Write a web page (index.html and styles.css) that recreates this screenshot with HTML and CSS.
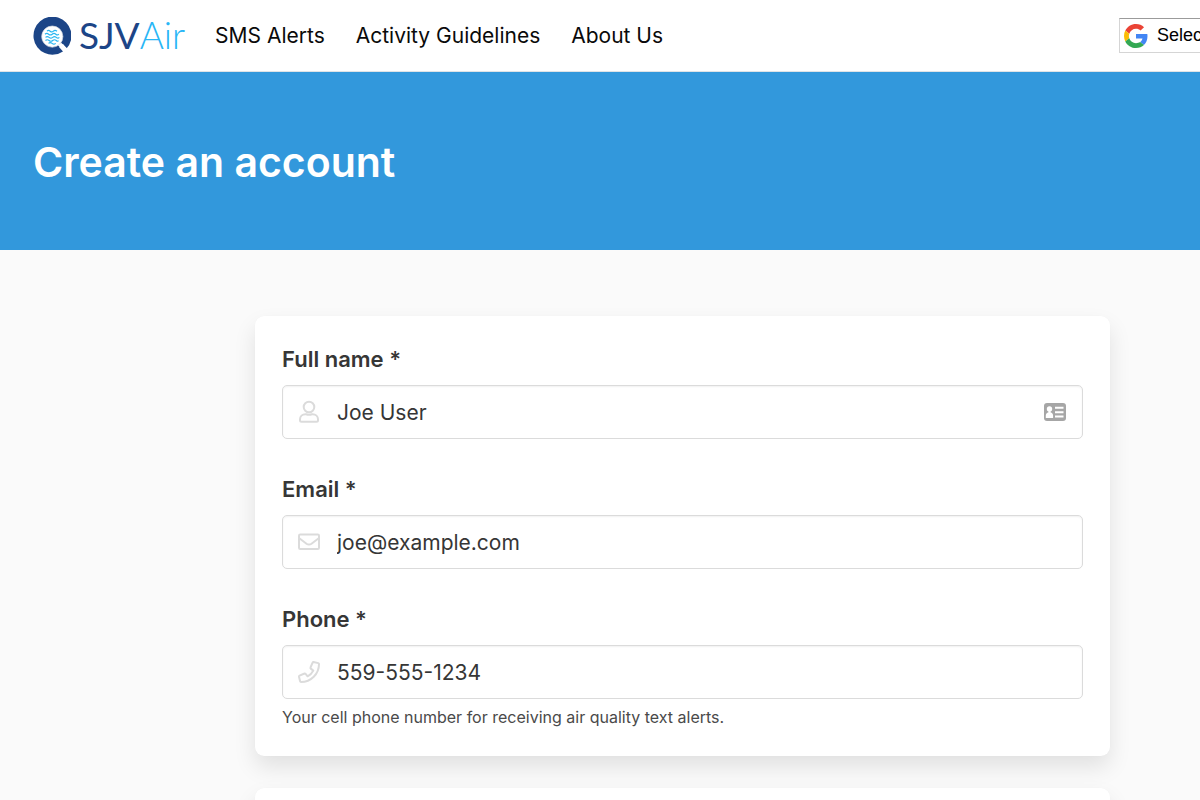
FILE: index.html
```html
<!DOCTYPE html>
<html lang="en">
<head>
    <meta charset="UTF-8">
    <meta name="viewport" content="width=device-width, initial-scale=1.0">
    <title>Create an account - SJVAir</title>
    <link rel="stylesheet" href="styles.css">
</head>
<body>
    <header class="navbar">
        <a class="logo" href="#">
            <svg class="logo-mark" viewBox="0 0 38 38" aria-hidden="true">
                <path d="M33.500 31.500A19 19 0 1 0 30 34.500L26 30l4-3z" fill="#1c4587"/>
                <path d="M25.500 26L35 35" stroke="#fff" stroke-width="4"/>
                <circle cx="19.300" cy="19.600" r="10.600" fill="#fff" stroke="#d3d8e0" stroke-width=".7"/>
                <path d="M14 14.200q1.500-1.500 3.200 0t3.200 0 3.600 0M12 17.200q1.800-1.500 3.600 0t3.600 0 3.600 0 3 0M12.500 20.400q1.800-1.500 3.600 0t3.600 0 3.600 0 3 0M12.500 23.500q1.800-1.500 3.600 0t3.600 0 3.600 0 2 0M15.500 26.400q1.800-1.500 3.600 0t3.600 0" fill="none" stroke="#29b6f0" stroke-width="1.200"/>
            </svg>
            <span class="logo-text">SJV<span class="logo-air">Air</span></span>
        </a>
        <nav class="menu">
            <a href="#">SMS Alerts</a>
            <a href="#">Activity Guidelines</a>
            <a href="#">About Us</a>
        </nav>
        <button class="translate" type="button">
            <svg class="google" viewBox="0 0 48 48" aria-hidden="true">
                <path fill="#ea4335" d="M24 9.500c3.540 0 6.710 1.220 9.210 3.600l6.850-6.850C35.900 2.380 30.470 0 24 0 14.620 0 6.510 5.380 2.560 13.220l7.980 6.190C12.430 13.720 17.740 9.500 24 9.500z"/>
                <path fill="#4285f4" d="M46.980 24.550c0-1.570-.15-3.090-.38-4.550H24v9.020h12.940c-.58 2.960-2.260 5.480-4.780 7.180l7.730 6c4.510-4.180 7.090-10.360 7.090-17.650z"/>
                <path fill="#fbbc05" d="M10.530 28.590c-.48-1.450-.76-2.990-.76-4.590s.27-3.140.76-4.590l-7.980-6.190C.92 16.460 0 20.120 0 24c0 3.880.92 7.540 2.560 10.780l7.970-6.190z"/>
                <path fill="#34a853" d="M24 48c6.480 0 11.930-2.130 15.890-5.810l-7.730-6c-2.150 1.450-4.920 2.300-8.160 2.300-6.260 0-11.570-4.220-13.470-9.910l-7.980 6.190C6.510 42.620 14.620 48 24 48z"/>
            </svg>
            <span>Select Language</span>
        </button>
    </header>

    <section class="hero">
        <h1>Create an account</h1>
    </section>

    <main class="content">
        <form id="signup" class="box">
            <div class="field">
                <label for="name">Full name *</label>
                <div class="control">
                    <svg class="icon" viewBox="0 0 24 24" aria-hidden="true">
                        <circle cx="12" cy="7" r="5.300"/>
                        <path d="M8.500 14.300h.5q3 1 6 0h.500c3.300 0 5.500 2.200 5.500 5v1c0 1-.6 1.500-1.500 1.500h-15c-.9 0-1.500-.5-1.500-1.500v-1c0-2.800 2.200-5 5.500-5z"/>
                    </svg>
                    <input type="text" id="name" value="Joe User">
                    <svg class="card-icon" viewBox="0 0 22 18" aria-hidden="true">
                        <rect width="22" height="18" rx="3" fill="#a6a6a6"/>
                        <circle cx="5.500" cy="6" r="2.700" fill="#fff"/>
                        <path d="M4.500 7h2v2.200c1.600.5 2.600 1.600 2.600 3.300V15H1.800v-2.500c0-1.700 1-2.800 2.700-3.300zM11 3.800h8.500v2H11zM11 8.200h8.500v2H11zM11 12.600h8.500v2H11z" fill="#fff"/>
                    </svg>
                </div>
            </div>
            <div class="field">
                <label for="email">Email *</label>
                <div class="control">
                    <svg class="icon" viewBox="0 0 24 24" aria-hidden="true">
                        <rect x="2" y="4.500" width="20" height="14.500" rx="1.200"/>
                        <path d="M2 8l7.500 5.700q2.500 1.800 5 0L22 8"/>
                    </svg>
                    <input type="email" id="email" value="joe@example.com">
                </div>
            </div>
            <div class="field">
                <label for="phone">Phone *</label>
                <div class="control">
                    <svg class="icon" viewBox="0 0 24 24" aria-hidden="true">
                        <path d="M16.500 2l4.800 1.100q.7.200.7.900C22 14 14 22 4 22q-.7 0-.9-.7L2 16.700q-.1-.8.600-1.100l4.900-2.100q.6-.3 1.100.3l2 2.500c2.400-1.200 4.500-3.300 5.700-5.700l-2.500-2q-.6-.5-.3-1.100l2.100-4.900q.3-.7.900-.6z"/>
                    </svg>
                    <input type="tel" id="phone" value="559-555-1234" aria-describedby="phone-help">
                </div>
                <p class="help" id="phone-help">Your cell phone number for receiving air quality text alerts.</p>
            </div>
        </form>
        <div class="box"></div>
    </main>
</body>
</html>
```
FILE: styles.css
```css
* {
    margin: 0;
    padding: 0;
    box-sizing: border-box;
}
html {
    height: 100%;
    overflow: hidden;
}
body {
    background: #fafafa;
    color: #363636;
    font-family: Inter, "Liberation Sans", sans-serif;
    font-size: 21px;
    line-height: 33px;
}
.navbar {
    display: flex;
    align-items: center;
    height: 72px;
    padding-left: 33px;
    background: white;
    border-bottom: 1px solid #dfe3e6;
}
.logo {
    display: flex;
    align-items: center;
    gap: 8px;
    color: #1c4587;
    text-decoration: none;
}
.logo-mark {
    width: 38px;
    height: 38px;
}
.logo-text {
    font-family: Lato, sans-serif;
    font-size: 37px;
    line-height: 36px;
    padding-bottom: 2px;
    white-space: nowrap;
}
.logo-air {
    color: #29b6f6;
    font-weight: 300;
}
.menu {
    display: flex;
    gap: 31px;
    margin-left: 30px;
    white-space: nowrap;
}
.menu a {
    color: #0a0a0a;
    text-decoration: none;
}
.translate {
    display: flex;
    align-items: center;
    gap: 9px;
    width: 81px;
    height: 35px;
    margin-left: auto;
    padding-left: 4px;
    overflow: hidden;
    background: white;
    border: 1px solid #d5d5d5;
    border-top-color: #9b9b9b;
    border-right: none;
    color: black;
    font-family: "Liberation Sans", Arial, sans-serif;
    font-size: 18px;
    white-space: nowrap;
    cursor: pointer;
}
.google {
    flex: none;
    width: 24px;
    height: 24px;
}
.hero {
    padding: 66px 33px 63px;
    background: #3298dc;
}
.hero h1 {
    color: white;
    font-size: 41px;
    font-weight: 600;
    line-height: 49px;
}
.content {
    display: flex;
    flex-direction: column;
    gap: 32px;
    padding: 66px 90px 0 255px;
}
.box {
    padding: 27px;
    background: white;
    border-radius: 9px;
    box-shadow: 0 11px 22px rgba(10, 10, 10, 0.1), 0 0 1px rgba(10, 10, 10, 0.04);
}
.field + .field {
    margin-top: 34px;
}
.field label {
    display: block;
    margin-bottom: 9px;
    font-size: 22px;
    font-weight: 600;
}
.control {
    display: flex;
    align-items: center;
    height: 54px;
    padding: 0 16px 0 14px;
    background: white;
    border: 1px solid #dbdbdb;
    border-radius: 5px;
    box-shadow: inset 0 1px 2px rgba(10, 10, 10, 0.06);
}
.control input {
    flex: 1;
    min-width: 0;
    margin-left: 16px;
    background: none;
    border: none;
    outline: none;
    color: #363636;
    font: inherit;
}
.icon {
    width: 24px;
    height: 24px;
    fill: none;
    stroke: #dbdbdb;
    stroke-width: 2;
    stroke-linejoin: round;
}
.card-icon {
    width: 22px;
    height: 18px;
}
.help {
    margin-top: 6px;
    color: #4a4a4a;
    font-size: 16px;
    line-height: 24px;
}
```
